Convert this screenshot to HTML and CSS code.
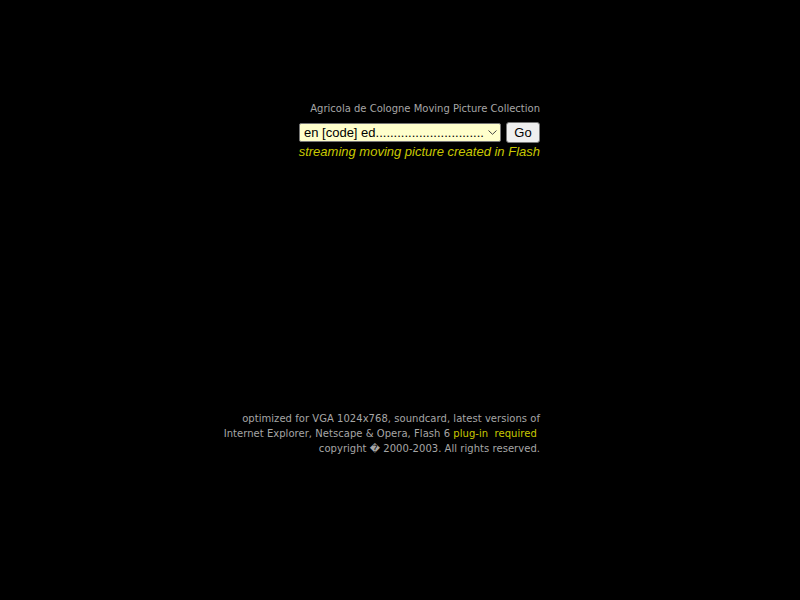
FILE: index.html
```html
<!DOCTYPE html>
<html>
<head>
<meta charset="utf-8">
<link rel="stylesheet" href="styles.css">
</head>
<body>
<div class="page">
  <div class="top">
    <div class="title">Agricola de Cologne Moving Picture Collection</div>
    <form class="jump">
      <span class="selwrap">
        <select class="sel"><option>en [code] ed..............................</option></select>
        <svg class="chev" width="9" height="5" viewBox="0 0 9 5"><path d="M0.5 0.5 L4.5 4.3 L8.5 0.5" fill="none" stroke="#444" stroke-width="1"/></svg>
      </span>
      <button type="button" class="go">Go</button>
    </form>
    <div class="tag">streaming moving picture created in Flash</div>
  </div>
  <div class="foot">
    <div class="line">optimized for VGA 1024x768, soundcard, latest versions of</div>
    <div class="line">Internet Explorer, Netscape &amp; Opera, Flash 6 <span class="link">plug-in&nbsp; required</span>&nbsp;</div>
    <div class="line">copyright � 2000-2003. All rights reserved.</div>
  </div>
</div>
</body>
</html>
```
FILE: styles.css
```css
html, body { margin: 0; padding: 0; background: #000; }
body { width: 800px; height: 600px; overflow: hidden; }
.page { width: 540px; display: flex; flex-direction: column; align-items: flex-end; }
.top { margin-top: 102px; display: flex; flex-direction: column; align-items: flex-end; }
.title { font-family: "DejaVu Sans", Verdana, sans-serif; font-size: 10px; color: #a6a6a6; line-height: 14px; }
.jump { display: flex; gap: 5px; margin: 6px 0 0; align-items: center; }
.selwrap { position: relative; display: flex; }
.sel { appearance: none; -webkit-appearance: none; width: 202px; height: 19px; background: #ffffcc; border: 1px solid #767676; border-radius: 2px; font-family: "Liberation Sans", Arial, sans-serif; font-size: 13px; color: #000; padding: 0 16px 0 4px; margin: 0; }
.chev { position: absolute; right: 4px; top: 7px; pointer-events: none; }
.go { height: 21px; width: 34px; padding: 0; font-family: "Liberation Sans", Arial, sans-serif; font-size: 13px; background: #efefef; border: 1px solid #767676; border-radius: 3px; color: #000; }
.tag { font-family: "Liberation Sans", Arial, sans-serif; font-style: italic; font-size: 13px; color: #c8c800; line-height: 16px; margin-top: 1px; }
.foot { margin-top: 251px; display: flex; flex-direction: column; align-items: flex-end; font-family: "DejaVu Sans", Verdana, sans-serif; font-size: 10px; color: #a6a6a6; letter-spacing: 0.04px; }
.line { line-height: 15px; }
.link { color: #c8c800; }
```
